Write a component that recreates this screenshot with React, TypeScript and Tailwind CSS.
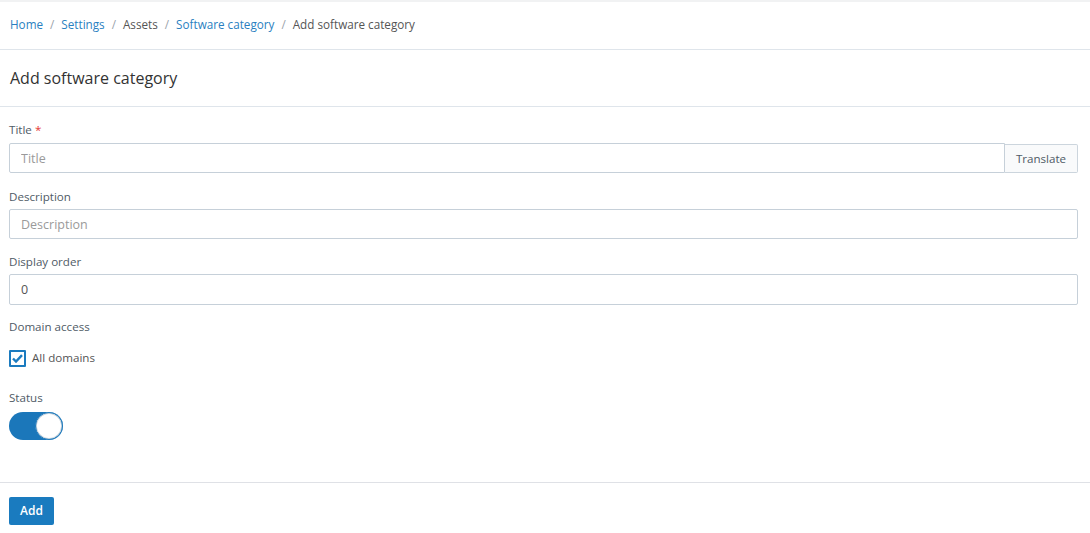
import React from "react";

export default function App() {
  const font = { fontFamily: '"Open Sans", "Noto Sans", sans-serif' };
  return (
    <div className="w-[1090px] h-[533px] bg-white overflow-hidden text-[#4f5b66]" style={font}>
      <div className="h-[2px] bg-[#f1f2f3]" />
      <div className="h-[48px] flex items-center pb-[2px] px-[10px] text-[11.7px] border-b border-[#dfe5eb]">
        <a className="text-[#2a7fc1]">Home</a>
        <span className="mx-[7px] text-[#9aa3ab]">/</span>
        <a className="text-[#2a7fc1]">Settings</a>
        <span className="mx-[7px] text-[#9aa3ab]">/</span>
        <span className="text-[#555]">Assets</span>
        <span className="mx-[7px] text-[#9aa3ab]">/</span>
        <a className="text-[#2a7fc1]">Software category</a>
        <span className="mx-[7px] text-[#9aa3ab]">/</span>
        <span className="text-[#555]">Add software category</span>
      </div>
      <div className="h-[57px] flex items-center px-[10px] border-b border-[#dfe5eb]">
        <h1 className="text-[16px] text-[#333]">Add software category</h1>
      </div>
      <div className="pl-[9px] pr-[12px] pt-[14px] text-[11.6px]">
        <div className="leading-[18px] mb-[4px] text-[#4f5b66]">
          Title <span className="text-[#e53935]">*</span>
        </div>
        <div className="flex h-[30px]">
          <input
            className="flex-1 h-[30px] border border-[#c6d0d9] rounded-l-[2px] px-[11px] text-[12.5px] outline-none placeholder:text-[#9a9a9a]"
            placeholder="Title"
            style={font}
          />
          <button className="w-[73px] h-[29px] mt-[1px] border border-l-0 border-[#ccd5dd] bg-[#f9fafb] text-[11.6px] text-[#4f5b66] rounded-r-[2px]">
            Translate
          </button>
        </div>

        <div className="leading-[18px] mt-[15px] mb-[3px]">Description</div>
        <input
          className="w-full h-[30px] border border-[#c6d0d9] rounded-[2px] px-[11px] text-[12.5px] outline-none placeholder:text-[#9a9a9a]"
          placeholder="Description"
          style={font}
        />

        <div className="leading-[18px] mt-[14px] mb-[3px]">Display order</div>
        <input
          className="w-full h-[31px] border border-[#c6d0d9] rounded-[2px] px-[11px] text-[12.5px] text-[#555] outline-none"
          defaultValue="0"
          style={font}
        />

        <div className="leading-[18px] mt-[13px]">Domain access</div>
        <div className="flex items-center mt-[13px] h-[18px]">
          <div className="w-[17px] h-[17px] border-2 border-[#1b7bbf] rounded-[1px] flex items-center justify-center bg-white">
            <svg width="11" height="9" viewBox="0 0 11 9">
              <path d="M1 4.5 L4 7.5 L10 1.2" fill="none" stroke="#1b7bbf" strokeWidth="2.4" />
            </svg>
          </div>
          <span className="ml-[6px] text-[11.6px] text-[#555]">All domains</span>
        </div>

        <div className="leading-[18px] mt-[22px]">Status</div>
        <div className="mt-[5px] w-[54px] h-[28px] rounded-full bg-[#1b77ba] relative">
          <div className="absolute right-0 top-0 w-[28px] h-[28px] rounded-full bg-white border border-[#1b77ba] shadow-[0_0_0_1px_#c9d3dc_inset]" />
        </div>
      </div>
      <div className="mt-[42px] border-t border-[#dfe1e6]" />
      <div className="pl-[9px] pt-[14px]">
        <button className="w-[45px] h-[28px] bg-[#1a7bbf] text-white text-[12px] font-semibold rounded-[2px]">
          Add
        </button>
      </div>
    </div>
  );
}
